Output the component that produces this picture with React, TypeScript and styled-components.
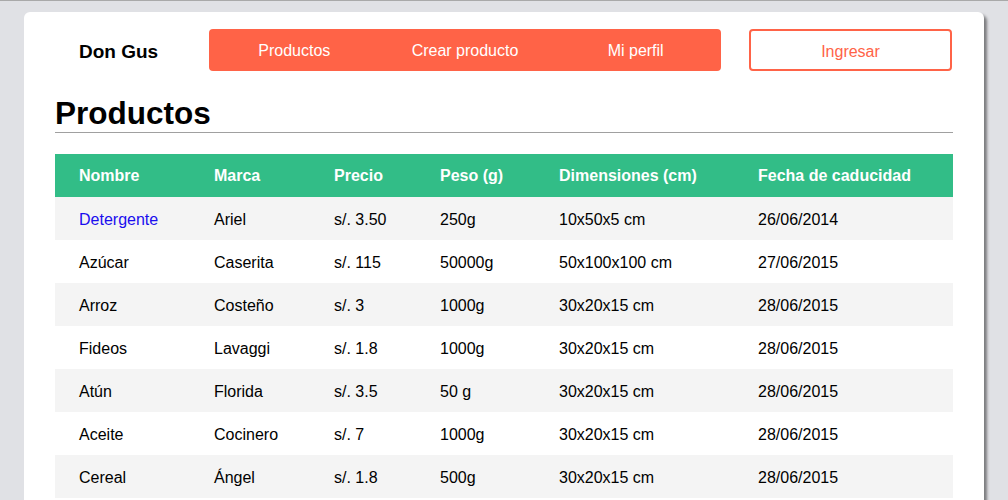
import React from "react";
import styled, { createGlobalStyle } from "styled-components";

const GlobalStyle = createGlobalStyle`
  html, body {
    margin: 0;
    padding: 0;
  }
  body {
    background: #e0e1e5;
    border-top: 1px solid #a9a9a9;
    font-family: "Liberation Sans", Arial, sans-serif;
    color: #000;
  }
`;

const Page = styled.div`
  padding: 11px 24px 0 24px;
`;

const Card = styled.main`
  width: 960px;
  box-sizing: border-box;
  background: #fff;
  border-radius: 6px;
  box-shadow: 3px 3px 3px rgba(0, 0, 0, 0.45);
  padding: 17px 31px 24px 31px;
`;

const Header = styled.header`
  display: flex;
  align-items: stretch;
  height: 42px;
`;

const Brand = styled.div`
  width: 154px;
  box-sizing: border-box;
  padding: 4px 0 0 24px;
  display: flex;
  align-items: center;
  font-size: 19px;
  font-weight: bold;
`;

const Nav = styled.nav`
  width: 512px;
  display: grid;
  grid-template-columns: repeat(3, 1fr);
  background: #ff6347;
  border-radius: 4px;
`;

const NavItem = styled.a`
  display: flex;
  align-items: center;
  justify-content: center;
  padding-top: 2px;
  color: #fff;
  font-size: 16px;
  text-decoration: none;
`;

const LoginButton = styled.button`
  margin-left: 28px;
  width: 203px;
  box-sizing: border-box;
  background: #fff;
  border: 2px solid #ff6347;
  border-radius: 4px;
  color: #ff6347;
  font-family: "Liberation Sans", Arial, sans-serif;
  font-size: 16px;
  padding: 4px 0 0 0;
`;

const Title = styled.h1`
  margin: 24px 0 0 0;
  font-size: 31.5px;
  line-height: 36px;
  font-weight: bold;
  padding-bottom: 1px;
  border-bottom: 1px solid #a0a0a0;
`;

const Table = styled.table`
  margin-top: 21px;
  width: 898px;
  border-collapse: collapse;
  table-layout: fixed;
  font-size: 16px;
`;

const Col = styled.col<{ $w: number }>`
  width: ${(p) => p.$w}px;
`;

const HeadRow = styled.tr`
  background: #32bd87;
`;

const Th = styled.th`
  text-align: left;
  color: #fff;
  font-weight: bold;
  padding: 12px 0 12px 24px;
  line-height: 19px;
  white-space: nowrap;
`;

const Row = styled.tr<{ $alt: boolean }>`
  background: ${(p) => (p.$alt ? "#f4f4f4" : "#fff")};
`;

const Td = styled.td`
  padding: 13px 0 11px 24px;
  line-height: 19px;
  white-space: nowrap;
`;

const Link = styled.a`
  color: #1a0dee;
  text-decoration: none;
`;

const columns = [
  { name: "Nombre", w: 135 },
  { name: "Marca", w: 120 },
  { name: "Precio", w: 106 },
  { name: "Peso (g)", w: 119 },
  { name: "Dimensiones (cm)", w: 199 },
  { name: "Fecha de caducidad", w: 219 },
];

const rows = [
  ["Detergente", "Ariel", "s/. 3.50", "250g", "10x50x5 cm", "26/06/2014"],
  ["Azúcar", "Caserita", "s/. 115", "50000g", "50x100x100 cm", "27/06/2015"],
  ["Arroz", "Costeño", "s/. 3", "1000g", "30x20x15 cm", "28/06/2015"],
  ["Fideos", "Lavaggi", "s/. 1.8", "1000g", "30x20x15 cm", "28/06/2015"],
  ["Atún", "Florida", "s/. 3.5", "50 g", "30x20x15 cm", "28/06/2015"],
  ["Aceite", "Cocinero", "s/. 7", "1000g", "30x20x15 cm", "28/06/2015"],
  ["Cereal", "Ángel", "s/. 1.8", "500g", "30x20x15 cm", "28/06/2015"],
];

export default function App() {
  return (
    <>
      <GlobalStyle />
      <Page>
        <Card>
          <Header>
            <Brand>Don Gus</Brand>
            <Nav>
              <NavItem href="#">Productos</NavItem>
              <NavItem href="#">Crear producto</NavItem>
              <NavItem href="#">Mi perfil</NavItem>
            </Nav>
            <LoginButton>Ingresar</LoginButton>
          </Header>
          <Title>Productos</Title>
          <Table>
            <colgroup>
              {columns.map((c) => (
                <Col key={c.name} $w={c.w} />
              ))}
            </colgroup>
            <thead>
              <HeadRow>
                {columns.map((c) => (
                  <Th key={c.name}>{c.name}</Th>
                ))}
              </HeadRow>
            </thead>
            <tbody>
              {rows.map((r, i) => (
                <Row key={i} $alt={i % 2 === 0}>
                  {r.map((cell, j) => (
                    <Td key={j}>
                      {i === 0 && j === 0 ? <Link href="#">{cell}</Link> : cell}
                    </Td>
                  ))}
                </Row>
              ))}
            </tbody>
          </Table>
        </Card>
      </Page>
    </>
  );
}
